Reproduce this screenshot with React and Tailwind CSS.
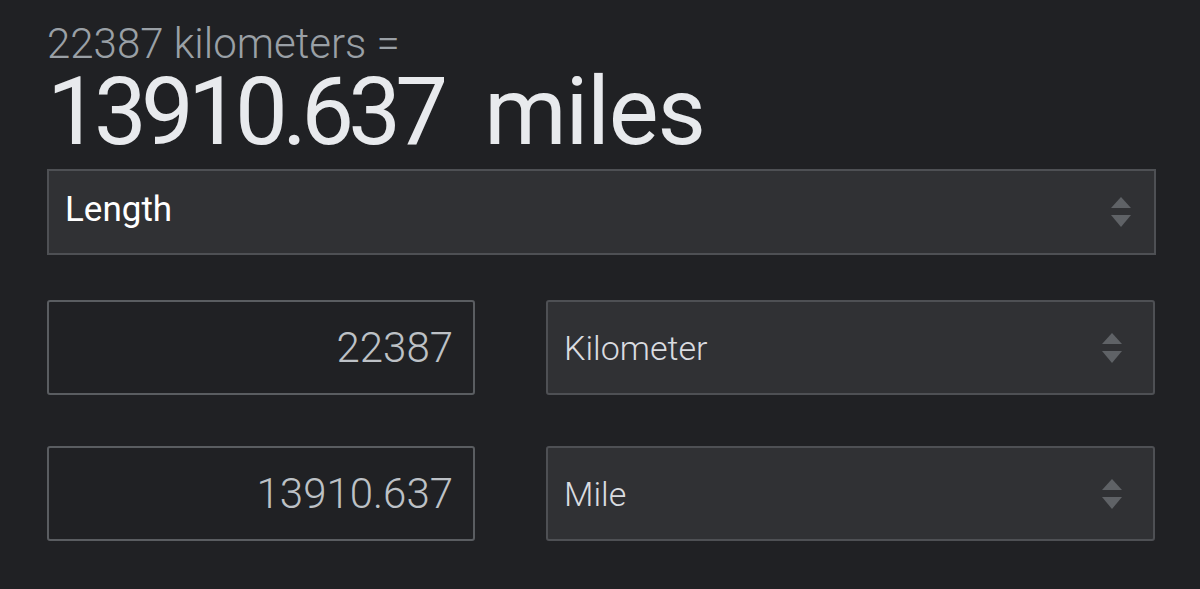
import React from 'react';

const Arrows = () => (
  <svg width="22" height="32" viewBox="0 0 22 32" className="shrink-0">
    <path d="M11 1 L21 12 L1 12 Z" fill="#5f6266" />
    <path d="M1 19 L21 19 L11 31 Z" fill="#5f6266" />
  </svg>
);

const NumberBox = ({ value }) => (
  <div className="w-[428px] h-[95px] border-2 border-[#5a5d61] rounded-[3px] bg-[#202124] flex items-center justify-end pr-[20px]">
    <span className="text-[42px] font-light leading-none text-[#bdc1c6]">{value}</span>
  </div>
);

const UnitSelect = ({ label }) => (
  <div className="w-[609px] h-[95px] border-2 border-[#4e5054] rounded-[3px] bg-[#303134] flex items-center justify-between pl-[16px] pr-[30px]">
    <span className="text-[34px] font-light leading-none text-[#dadce0]">{label}</span>
    <Arrows />
  </div>
);

export default function App() {
  return (
    <div className="w-[1200px] h-[589px] bg-[#202124] overflow-hidden pl-[47px] pt-[23px]" style={{ fontFamily: 'Roboto, "Liberation Sans", sans-serif' }}>
      <div className="text-[42px] leading-[42px] font-light text-[#9aa0a6]">22387 kilometers =</div>
      <div className="text-[94px] leading-[94px] text-[#e8eaed] whitespace-nowrap">
        <span className="tracking-[-5.8px]">13910.637</span>
        <span className="ml-[42px] tracking-[-1.2px]">miles</span>
      </div>

      <div className="mt-[10px] w-[1109px] h-[86px] border-2 border-[#4e5054] bg-[#303134] flex items-center justify-between pl-[16px] pr-[22px]">
        <span className="text-[35px] font-normal leading-none text-white -mt-[6px]">Length</span>
        <Arrows />
      </div>

      <div className="mt-[45px] flex gap-[71px]">
        <NumberBox value="22387" />
        <UnitSelect label="Kilometer" />
      </div>
      <div className="mt-[51px] flex gap-[71px]">
        <NumberBox value="13910.637" />
        <UnitSelect label="Mile" />
      </div>
    </div>
  );
}
